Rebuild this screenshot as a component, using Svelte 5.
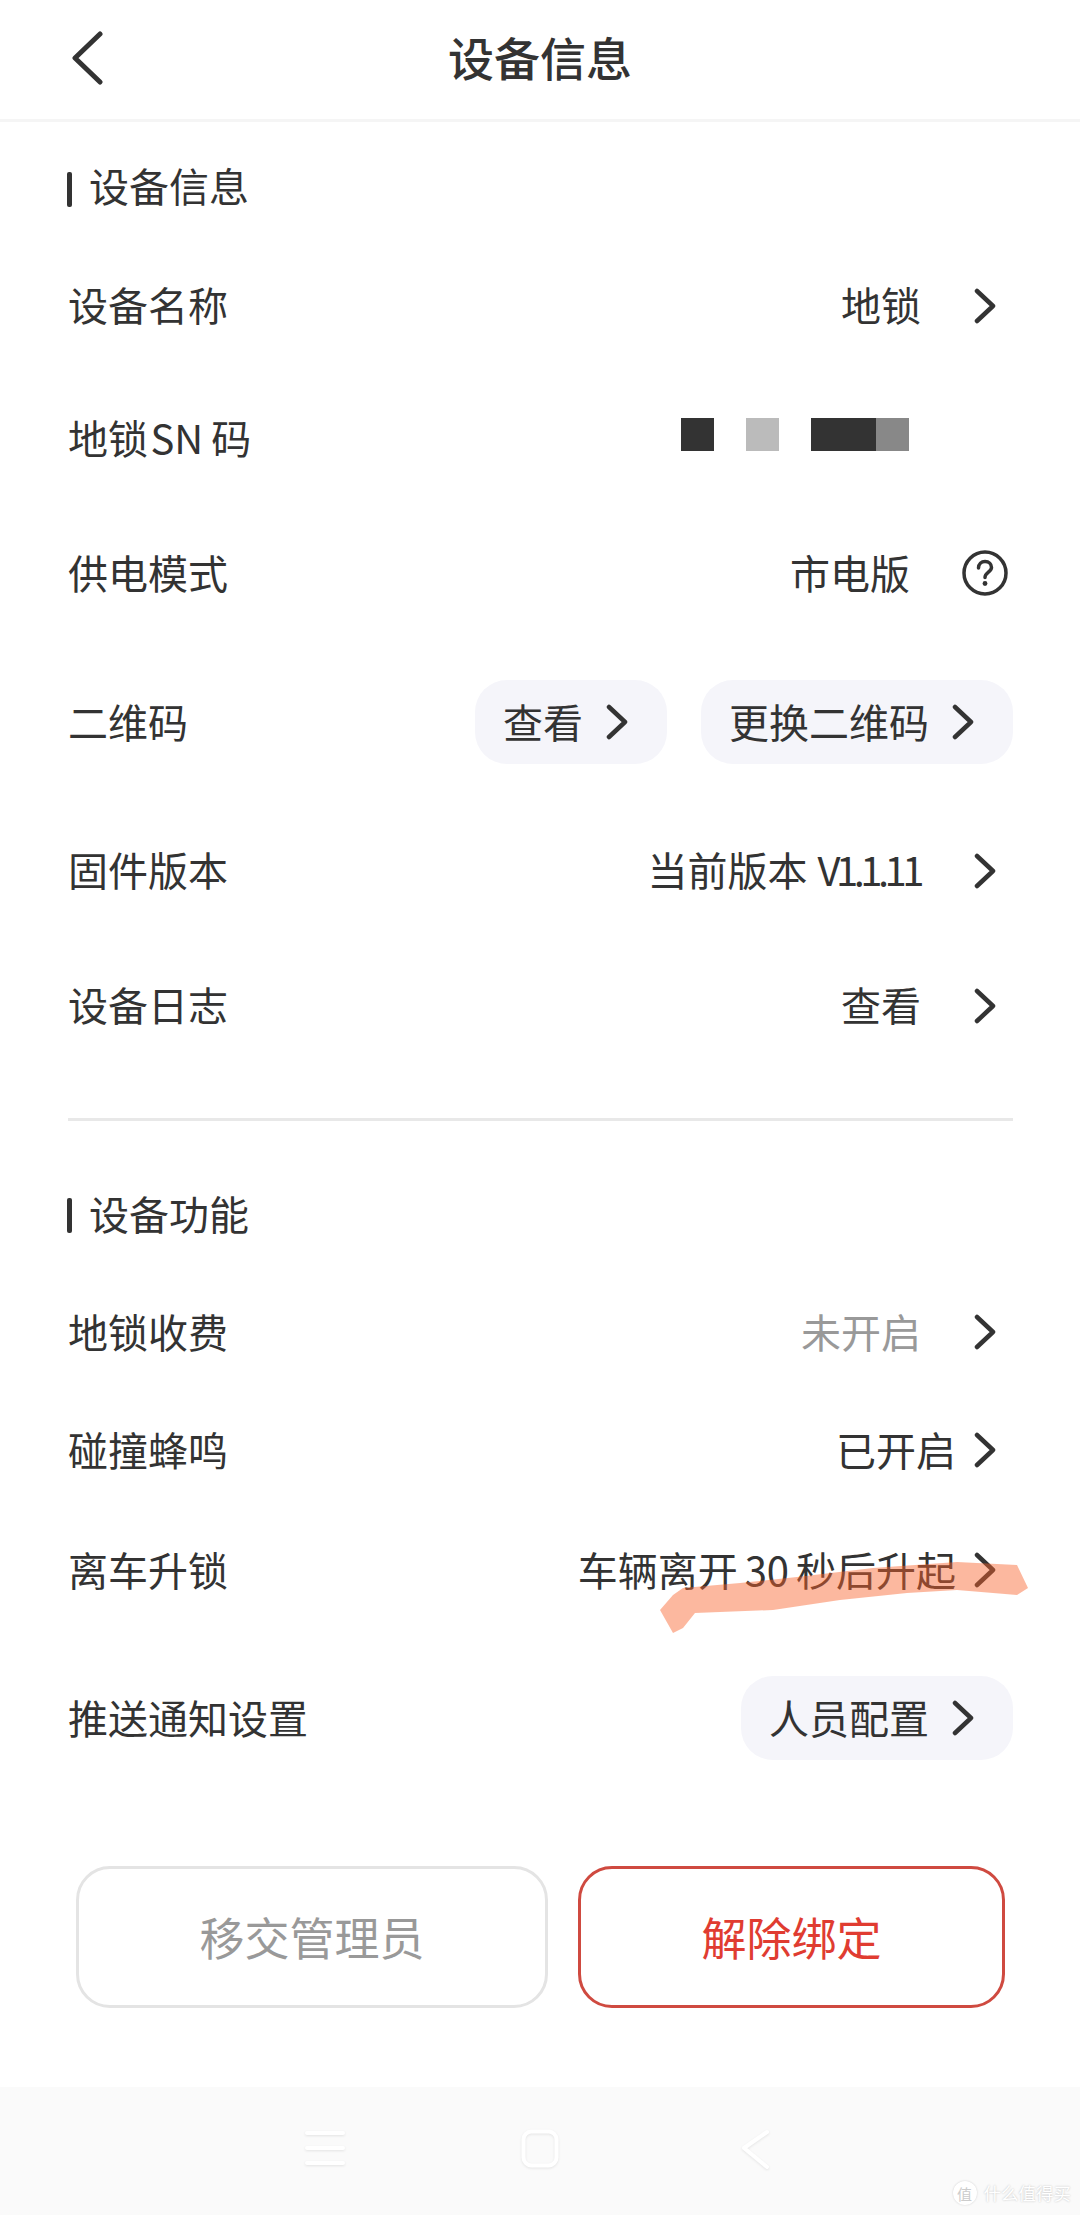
<script lang="ts">
	const infoRows = [
		{ label: '设备名称', value: '地锁', kind: 'link' },
		{ label: '地锁\u200aSN\u2009码', kind: 'masked' },
		{ label: '供电模式', value: '市电版', kind: 'help' },
		{ label: '二维码', pills: ['查看', '更换二维码'], kind: 'pills' },
		{ label: '固件版本', value: '当前版本', version: 'V1.1.11', kind: 'link' },
		{ label: '设备日志', value: '查看', kind: 'link' }
	];

	const featureRows = [
		{ label: '地锁收费', value: '未开启', kind: 'link', muted: true },
		{ label: '碰撞蜂鸣', value: '已开启', kind: 'link', tight: true },
		{ label: '离车升锁', value: '车辆离开 30 秒后升起', kind: 'link', tight: true },
		{ label: '推送通知设置', pills: ['人员配置'], kind: 'pills' }
	];
</script>

{#snippet chevron()}
	<svg class="chevron" viewBox="0 0 24 36" aria-hidden="true">
		<path d="M4 3 L20 18 L4 33" />
	</svg>
{/snippet}

{#snippet row(item)}
	<div class="row">
		<span class="label">{item.label}</span>
		<div class="right">
			{#if item.kind === 'masked'}
				<div class="masked">
					<i class="dark one"></i>
					<i class="light one"></i>
					<i class="dark two"></i><i class="mid one"></i>
				</div>
			{:else if item.kind === 'pills'}
				{#each item.pills as pill}
					<button class="pill"><span class="pill-text">{pill}</span>{@render chevron()}</button>
				{/each}
			{:else}
				<span class="value" class:muted={item.muted} class:tight={item.tight}>
					{item.value}{#if item.version}<span class="version">{item.version}</span>{/if}
				</span>
				{#if item.kind === 'help'}
					<svg class="help-icon" viewBox="0 0 46 46" aria-hidden="true">
						<circle cx="23" cy="23" r="21" />
						<path d="M16.5 18 C16.5 14 19.5 11.5 23 11.5 C27 11.5 29.5 14 29.5 17.5 C29.5 22 23 22.5 23 27.5" />
						<circle class="dot" cx="23" cy="33.5" r="2.4" />
					</svg>
				{:else}
					{@render chevron()}
				{/if}
			{/if}
		</div>
	</div>
{/snippet}

<div class="page">
	<header class="topbar">
		<svg class="back" viewBox="0 0 34 54" aria-hidden="true">
			<path d="M30 3 L5 27 L30 51" />
		</svg>
		<h1>设备信息</h1>
	</header>

	<main class="content">
		<h2 class="section-title">设备信息</h2>
		<div class="rows info">
			{#each infoRows as item}
				{@render row(item)}
			{/each}
		</div>

		<hr />

		<h2 class="section-title second">设备功能</h2>
		<div class="rows features">
			{#each featureRows as item}
				{@render row(item)}
			{/each}
		</div>

		<div class="actions">
			<button class="action transfer">移交管理员</button>
			<button class="action unbind">解除绑定</button>
		</div>
	</main>

	<nav class="navbar">
		<svg class="nav-icon" viewBox="0 0 500 80" aria-hidden="true">
			<path d="M27 23 H63 M27 38 H63 M27 53 H63" />
			<rect x="243.5" y="21.5" width="33" height="34" rx="8" />
			<path d="M487 22 L464 38 L487 57" />
		</svg>
		<div class="watermark">
			<span class="badge">值</span>
			<span>什么值得买</span>
		</div>
	</nav>

	<!-- marker stroke someone drew on the screenshot -->
	<svg class="scribble" viewBox="0 0 390 90" aria-hidden="true">
		<path d="M10 60 L23 45 L33 38 L90 33 L147 27 L223 18 L307 12 L367 15 L378 38 L367 45 L307 40 L257 43 L190 50 L123 60 L45 63 L33 78 L23 83 Z" />
	</svg>
</div>

<style>
	:global(body) {
		margin: 0;
		background: #fff;
	}

	.page {
		position: relative;
		width: 1080px;
		height: 2215px;
		display: flex;
		flex-direction: column;
		overflow: hidden;
		background: #fff;
		color: #333;
		font-family: 'Noto Sans CJK SC', 'Noto Sans', sans-serif;
	}

	.topbar {
		height: 122px;
		box-sizing: border-box;
		flex: none;
		display: flex;
		align-items: center;
		justify-content: center;
		position: relative;
		border-bottom: 3px solid #f5f5f5;
	}

	.back {
		position: absolute;
		left: 70px;
		top: 31px;
		width: 34px;
		height: 54px;
		fill: none;
		stroke: #333;
		stroke-width: 5;
		stroke-linecap: round;
		stroke-linejoin: round;
	}

	h1 {
		margin: 0;
		font-size: 46px;
		font-weight: 500;
		line-height: 1;
		padding-bottom: 8px;
	}

	.content {
		flex: 1;
		padding: 0 67px 0 68px;
	}

	.section-title {
		margin: 0;
		height: 119px;
		display: flex;
		align-items: center;
		gap: 17px;
		box-sizing: border-box;
		padding: 7px 0 0 0;
		font-size: 40px;
		font-weight: 400;
		margin-left: -1px;
	}

	.section-title::before {
		content: '';
		width: 5px;
		height: 35px;
		margin-top: 8px;
		border-radius: 2px;
		background: #333;
	}

	.section-title.second {
		height: 152px;
		padding-top: 32px;
	}

	.section-title.second::before {
		margin-top: 5px;
	}

	.rows {
		display: grid;
	}

	.info {
		grid-template-rows: 129px 136px 134px 164px 133px 137px;
	}

	.features {
		grid-template-rows: 118px 118px 122px 174px;
	}

	.row {
		display: flex;
		align-items: center;
		justify-content: space-between;
		font-size: 40px;
		line-height: 1;
	}

	/* CJK glyphs sit a little low in their line box */
	.label,
	.value,
	.pill-text {
		margin-bottom: 3px;
	}

	.right {
		display: flex;
		align-items: center;
	}

	.chevron {
		flex: none;
		width: 24px;
		height: 36px;
		fill: none;
		stroke: #333;
		stroke-width: 4.5;
		stroke-linecap: round;
		stroke-linejoin: round;
	}

	.right > .chevron {
		margin-left: 52px;
		margin-right: 16px;
	}

	.value {
		color: #333;
		word-spacing: -2px;
	}

	.value.muted {
		color: #999;
	}

	.value.tight + .chevron {
		margin-left: 17px;
	}

	/* the reference font sets the 1s very narrow */
	.version {
		margin-left: 10px;
		letter-spacing: -4.5px;
		margin-right: 1px;
	}

	.help-icon {
		width: 46px;
		height: 46px;
		margin-left: 52px;
		margin-right: 5px;
		fill: none;
		stroke: #333;
		stroke-width: 3.5;
		stroke-linecap: round;
	}

	.help-icon .dot {
		fill: #333;
		stroke: none;
	}

	.masked {
		display: flex;
		margin-right: 104px;
		margin-bottom: 7px;
		height: 33px;
	}

	.masked i {
		display: block;
		height: 33px;
	}

	.masked .one {
		width: 33px;
	}

	.masked .two {
		width: 65px;
	}

	.masked .dark {
		background: #333;
	}

	.masked .light {
		background: #bbb;
		margin: 0 32px;
	}

	.masked .mid {
		background: #888;
	}

	.pill {
		height: 84px;
		display: flex;
		align-items: center;
		gap: 22px;
		padding: 0 38px 0 28px;
		border: none;
		border-radius: 32px;
		background: #f5f5fa;
		color: #333;
		font: inherit;
	}

	.pill + .pill {
		margin-left: 34px;
	}

	hr {
		margin: 44px 0 0 0;
		border: none;
		height: 3px;
		background: #e8e8e8;
	}

	.actions {
		display: flex;
		gap: 30px;
		margin: 61px 8px 0 8px;
	}

	.action {
		height: 142px;
		box-sizing: border-box;
		border-radius: 34px;
		background: #fff;
		font: inherit;
		font-size: 45px;
		padding: 0 0 2px 0;
	}

	.transfer {
		width: 473px;
		border: 3px solid #e4e4e4;
		color: #999;
	}

	.unbind {
		width: 428px;
		border: 3px solid #cf4a40;
		color: #e03c31;
	}

	.navbar {
		flex: none;
		height: 128px;
		position: relative;
		background: #fafafa;
	}

	.nav-icon {
		position: absolute;
		left: 280px;
		top: 23px;
		width: 500px;
		height: 80px;
		fill: none;
		stroke: #fff;
		stroke-width: 4;
		stroke-linecap: round;
		stroke-linejoin: round;
		filter: drop-shadow(0 1px 1px #e4e4e4);
	}

	.watermark {
		position: absolute;
		right: 9px;
		bottom: 10px;
		display: flex;
		align-items: center;
		gap: 7px;
		font-size: 17.5px;
		line-height: 1;
		color: #fff;
		text-shadow: 0 0 2px #bbb;
	}

	.badge {
		width: 24px;
		height: 24px;
		border-radius: 50%;
		display: flex;
		align-items: center;
		justify-content: center;
		background: #fff;
		box-shadow: 0 0 2px #ccc;
		font-size: 15px;
		color: #ccc;
		text-shadow: none;
	}

	.scribble {
		position: absolute;
		left: 650px;
		top: 1550px;
		width: 390px;
		height: 90px;
		fill: #fa632c;
		opacity: 0.45;
	}
</style>
